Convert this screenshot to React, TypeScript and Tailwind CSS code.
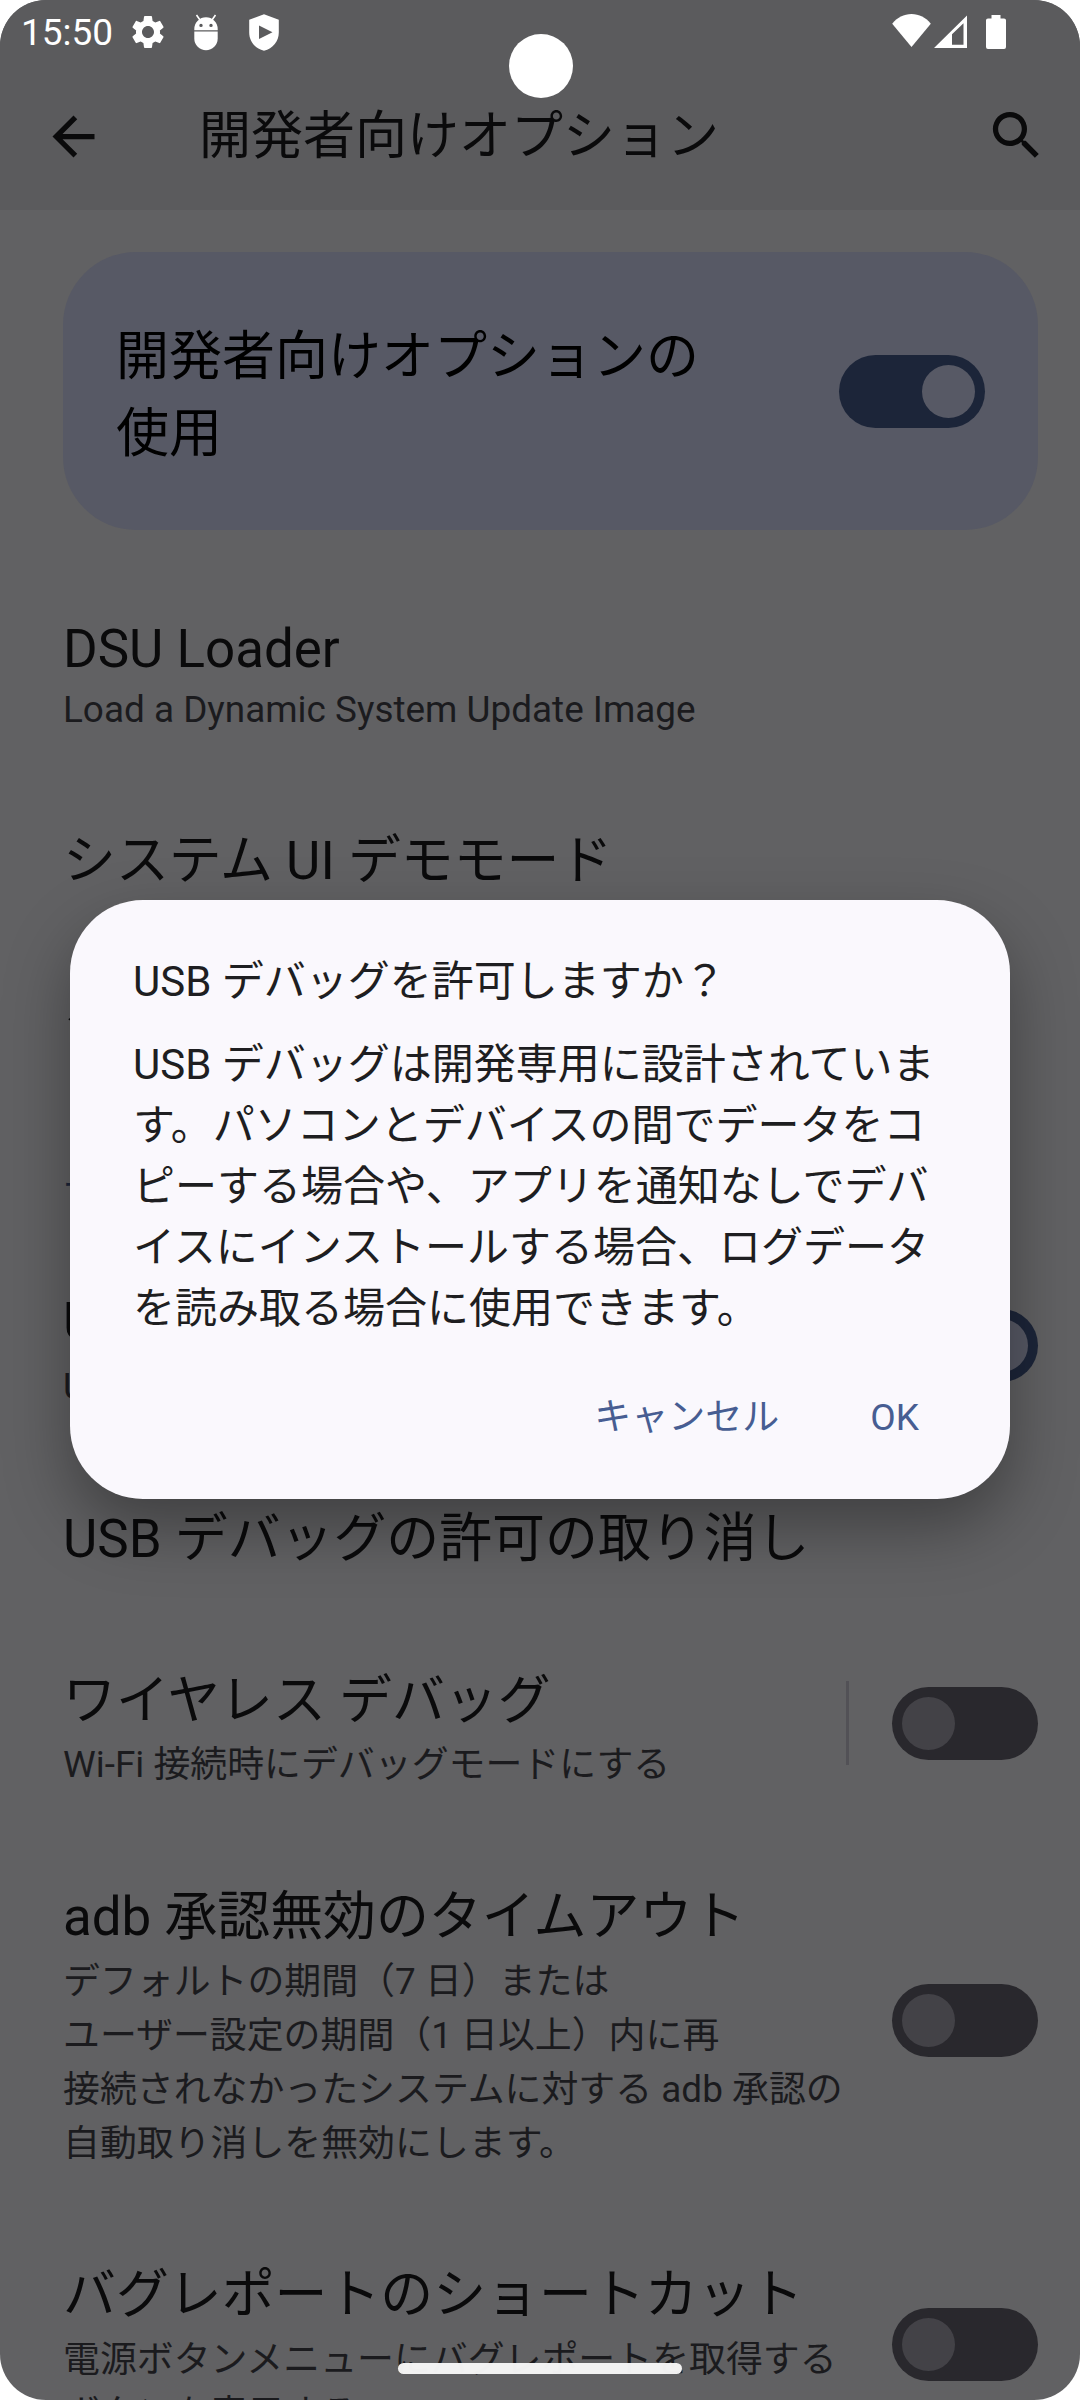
import React from "react";
import { MdArrowBack, MdSearch, MdSettings } from "react-icons/md";

function Switch({ on = false }: { on?: boolean }) {
  return (
    <div
      className={
        on
          ? "flex h-[73px] w-[146px] shrink-0 items-center justify-end rounded-full bg-[#1c2539] px-[10px]"
          : "flex h-[73px] w-[146px] shrink-0 items-center justify-start rounded-full bg-[#29282d] px-[10px]"
      }
    >
      <div className={on ? "size-[53px] rounded-full bg-[#575965]" : "size-[53px] rounded-full bg-[#434247]"} />
    </div>
  );
}

type RowProps = {
  title: string;
  lines?: string[];
  className: string;
  gap?: string;
  toggle?: "on" | "off";
  divider?: boolean;
};

function Row({ title, lines = [], className, gap = "mt-[6px]", toggle, divider }: RowProps) {
  return (
    <div className={`flex items-center justify-between pr-[42px] pl-[63px] ${className}`}>
      <div className="whitespace-nowrap">
        <div className="h-[64px] text-[52.9px] leading-[64px] text-[#0a0a0b]">{title}</div>
        {lines.length > 0 && (
          <div className={`text-[36.9px] leading-[54px] text-[#1b1b1e] ${gap}`}>
            {lines.map((l) => (
              <div key={l}>{l}</div>
            ))}
          </div>
        )}
      </div>
      {toggle && (
        <div className={toggle === "on" ? "flex items-center pb-[13px]" : "flex items-center pb-[15px]"}>
          {divider && <div className="mr-[43px] h-[84px] w-[3px] bg-[#525156]" />}
          <Switch on={toggle === "on"} />
        </div>
      )}
    </div>
  );
}

function StatusBar() {
  return (
    <div className="flex h-[64px] items-center pr-[74px] pl-[21px] text-white">
      <span className="w-[107px] pt-[2px] text-[37px] leading-[62px]">15:50</span>
      <MdSettings className="size-[40px]" />
      <svg className="ml-[26px] h-[37px] w-[24px]" viewBox="0 0 24 37" fill="currentColor">
        <path d="M2.5 1 6 6M21.5 1 18 6" stroke="currentColor" strokeWidth="1.6" fill="none" />
        <path
          fillRule="evenodd"
          d="M.3 16.2V15A11.7 11.7 0 0 1 23.7 15v1.2zM7 9.700a1.700 1.700 0 1 0 0 3.400 1.700 1.700 0 0 0 0-3.400zm10 0a1.700 1.700 0 1 0 0 3.400 1.700 1.700 0 0 0 0-3.400z"
        />
        <path d="M.3 17.600h23.400v6.900a11.700 11.700 0 0 1-23.400 0z" />
      </svg>
      <svg className="ml-[31px] h-[37px] w-[30px]" viewBox="0 0 30 37" fill="currentColor">
        <path fillRule="evenodd" d="M15 .2 29.800 5.800v12.700c0 8.600-5.800 16-14.800 18.200C6 34.500.2 27.100.2 18.500V5.800zM10 11.600v13.400L23.500 18.300z" />
      </svg>
      <div className="grow" />
      <svg className="mr-[3px] mb-[3px] h-[33px] w-[39px]" viewBox="0 0 39 36" preserveAspectRatio="none" fill="currentColor">
        <path d="M19.500 36 .2 10.500C5 4 12 0 19.500 0S34 4 38.800 10.500z" />
      </svg>
      <svg className="mr-[19px] mb-[2px] h-[33px] w-[33px]" viewBox="0 0 33 36" preserveAspectRatio="none" fill="currentColor">
        <path fillRule="evenodd" d="M33 .5v35.500H0zM29.500 9 18 21V32.500h11.500z" />
      </svg>
      <svg className="h-[35px] w-[20px]" viewBox="0 0 20 36" preserveAspectRatio="none" fill="currentColor">
        <path d="M5.500 0h9v3.500H18a2 2 0 0 1 2 2V33a2 2 0 0 1-2 2H2a2 2 0 0 1-2-2V5.500a2 2 0 0 1 2-2h3.500z" />
      </svg>
    </div>
  );
}

function UsbDialog() {
  return (
    <div
      role="dialog"
      className="absolute top-[900px] left-[70px] h-[599px] w-[940px] rounded-[73px] bg-[#faf8fd] px-[63px] pt-[51px] text-[#1e1e21] shadow-[0_28px_64px_rgba(0,0,0,0.34)]"
    >
      <h2 className="text-[42px] leading-[61px]">USB デバッグを許可しますか？</h2>
      <p className="mt-[22px] text-[42px] leading-[61px] whitespace-nowrap">
        USB デバッグは開発専用に設計されていま
        <br />
        す。パソコンとデバイスの間でデータをコ
        <br />
        ピーする場合や、アプリを通知なしでデバ
        <br />
        イスにインストールする場合、ログデータ
        <br />
        を読み取る場合に使用できます。
      </p>
      <div className="mt-[52px] flex justify-end gap-[91px] pr-[28px] text-[37px] leading-[54px] text-[#475d92]">
        <button>キャンセル</button>
        <button>OK</button>
      </div>
    </div>
  );
}

export default function App() {
  return (
    <div className="h-[2400px] w-[1080px] bg-white">
      <div
        className="relative h-[2400px] w-[1080px] overflow-hidden rounded-[46px] bg-[#616163] font-['Roboto','Noto_Sans_CJK_JP',sans-serif]"
        lang="ja"
      >
        <header className="h-[210px] bg-[#5b5b5d]">
          <StatusBar />
          <div className="flex h-[146px] items-center pr-[32px] pl-[42px] text-[#0a0a0b]">
            <MdArrowBack className="mb-[2px] size-[63px]" />
            <h1 className="ml-[94px] grow text-[52px] leading-[76px]">開発者向けオプション</h1>
            <MdSearch className="mb-[3px] size-[63px]" />
          </div>
        </header>

        <main>
          <div className="mt-[42px] mr-[42px] ml-[63px] flex h-[278px] items-center justify-between rounded-[73px] bg-[#575965] pr-[53px] pl-[53px]">
            <div className="pt-[10px] text-[53px] leading-[77px] text-black">
              開発者向けオプションの
              <br />
              使用
            </div>
            <Switch on />
          </div>

          <Row className="mt-[87px]" title="DSU Loader" lines={["Load a Dynamic System Update Image"]} gap="mt-[2px]" />
          <Row className="mt-[92px]" title="システム UI デモモード" />
          <Row className="mt-[97px]" title="クイック設定開発者用タイル" />
          <div className="mt-[108px] pl-[63px] text-[37px] leading-[54px] text-[#1c2539]">デバッグ</div>
          <Row className="mt-[74px]" title="USB デバッグ" lines={["USB 接続時にデバッグモードにする"]} toggle="on" />
          <Row className="mt-[93px]" title="USB デバッグの許可の取り消し" />
          <Row
            className="mt-[98px]"
            title="ワイヤレス デバッグ"
            lines={["Wi-Fi 接続時にデバッグモードにする"]}
            gap="mt-[5px]"
            toggle="off"
            divider
          />
          <Row
            className="mt-[93px]"
            title="adb 承認無効のタイムアウト"
            lines={[
              "デフォルトの期間（7 日）または",
              "ユーザー設定の期間（1 日以上）内に再",
              "接続されなかったシステムに対する adb 承認の",
              "自動取り消しを無効にします。",
            ]}
            toggle="off"
          />
          <Row
            className="mt-[92px]"
            title="バグレポートのショートカット"
            lines={["電源ボタンメニューにバグレポートを取得する", "ボタンを表示する"]}
            toggle="off"
          />
        </main>

        <UsbDialog />
        <div className="absolute top-[34px] left-[509px] size-[64px] rounded-full bg-white" />
        <div className="absolute top-[2363px] left-[398px] h-[11px] w-[284px] rounded-full bg-[#f5f5f5]/98" />
      </div>
    </div>
  );
}
